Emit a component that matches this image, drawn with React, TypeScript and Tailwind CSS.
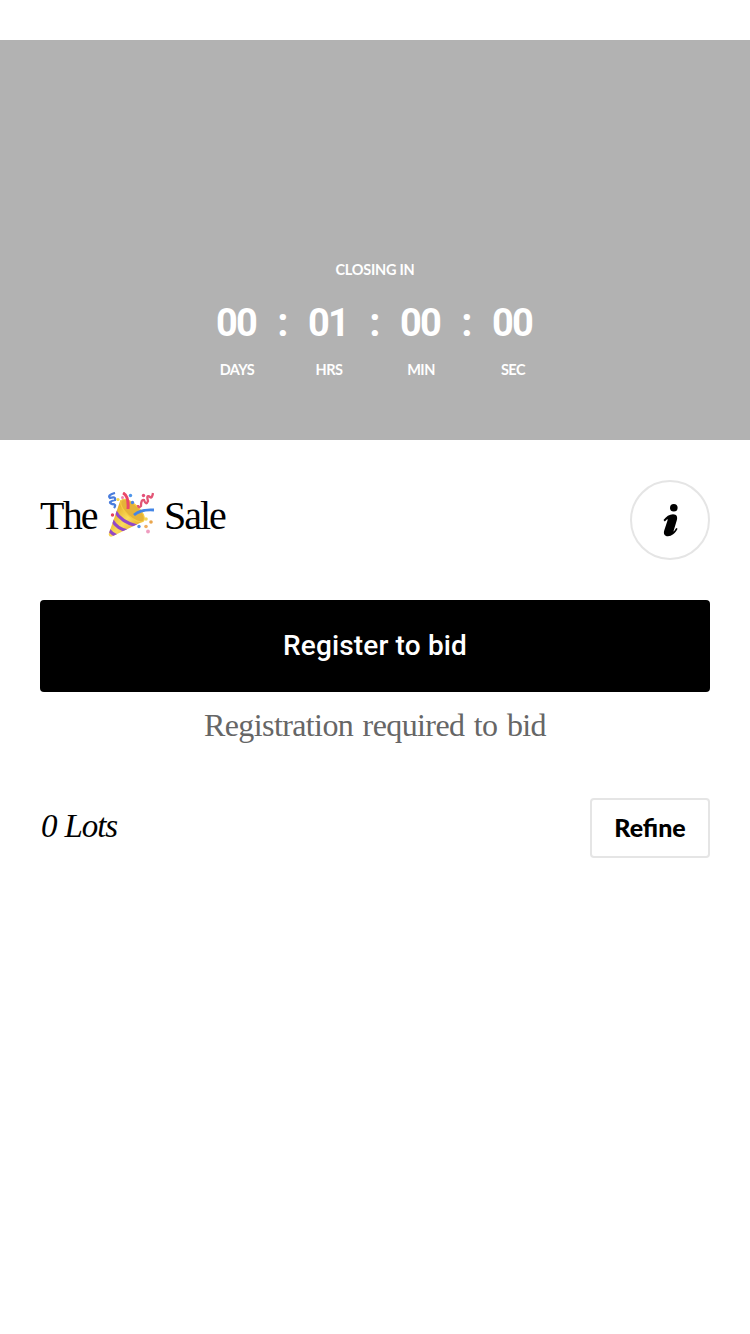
const units = [
  { value: "00", label: "DAYS" },
  { value: "01", label: "HRS" },
  { value: "00", label: "MIN" },
  { value: "00", label: "SEC" },
];

const sans = "font-['Lato','Liberation_Sans',sans-serif]";
const serif = "font-['Liberation_Serif',serif]";

function PartyPopper() {
  return (
    <svg viewBox="0 0 46 46" className="h-[46px] w-[46px] shrink-0" aria-hidden="true">
      <defs>
        <linearGradient id="cone" x1="0" y1="0.3" x2="0.8" y2="1">
          <stop offset="0" stopColor="#dfa31d" />
          <stop offset="0.5" stopColor="#fbdc5b" />
          <stop offset="1" stopColor="#d99a1a" />
        </linearGradient>
        <clipPath id="coneClip">
          <path d="M12.5 8 Q25 16 36 29 L4 44.5 Q0 45.5 1 41 Z" />
        </clipPath>
      </defs>
      <path d="M12.5 8 Q25 16 36 29 L4 44.5 Q0 45.5 1 41 Z" fill="url(#cone)" />
      <ellipse cx="24.5" cy="18.6" rx="15" ry="6.3" transform="rotate(43 24.5 18.6)" fill="#e5b338" stroke="#f6cc43" strokeWidth="1.2" />
      <g clipPath="url(#coneClip)" fill="none" stroke="#9248c8" strokeWidth="3.2">
        <path d="M7 19 Q13 30 29 34" />
        <path d="M4 28 Q9 37 20 39" />
        <path d="M0 37 Q4 42 9 44" />
      </g>
      <path d="M15 1 Q21 4 20 17" fill="none" stroke="#ea4768" strokeWidth="3" />
      <path d="M26 23 Q33 17 46 18" fill="none" stroke="#4385e6" strokeWidth="2.8" />
      <path d="M7 1 Q-1 3 2 6 Q8 4 7 8 Q-1 10 4 12 Q9 12 6 16" fill="none" stroke="#4a7ddd" strokeWidth="2.3" />
      <path d="M30 13 Q30 17 33 14 Q33 7 36 8 Q38 14 40 9 Q38 2 42 5 Q44 7 45 1" fill="none" stroke="#e25575" strokeWidth="2.3" />
      <g>
        <circle cx="10" cy="7.5" r="1.6" fill="#f7d84b" />
        <circle cx="14.5" cy="5.5" r="1.5" fill="#ef86ad" />
        <circle cx="22.5" cy="3.5" r="1.7" fill="#4d95eb" />
        <circle cx="24.5" cy="10.5" r="1.7" fill="#4d85e5" />
        <circle cx="35.5" cy="3.5" r="1.7" fill="#e5507a" />
        <circle cx="4.5" cy="23" r="1.7" fill="#e5405d" />
        <circle cx="38" cy="27" r="1.8" fill="#f4d659" />
        <circle cx="43" cy="30" r="1.8" fill="#e9a54d" />
        <circle cx="31" cy="34.5" r="1.7" fill="#4d8bea" />
        <circle cx="38" cy="34.5" r="1.8" fill="#f0ae62" />
        <circle cx="40" cy="39.5" r="1.9" fill="#ef9dc0" />
      </g>
    </svg>
  );
}

function InfoGlyph() {
  return (
    <svg viewBox="0 0 16 34" className="ml-0.5 h-[34px] w-4" aria-hidden="true">
      <circle cx="10.8" cy="4.7" r="3.8" />
      <path d="M.5 17 C3 13.5 6.5 11.2 10 11.2 C13.9 11.2 14.8 14 13.8 17.3 L10.8 27.2 C10.3 28.8 10.5 28.8 11.2 28.1 L13.2 24.9 L14.6 25.8 C12 30.5 8.6 33.2 5 33.2 C1.4 33.2 .2 30.6 1.3 27.2 L4.5 17.4 C4.9 16 4.5 15.8 3.8 16.6 L1.8 18.6 Z" />
    </svg>
  );
}

export default function App() {
  return (
    <main className="flex min-h-[1334px] w-full flex-col bg-white pt-10 text-black">
      <section className={`flex h-[400px] flex-col items-center bg-[#b2b2b2] pt-[220px] font-bold text-white ${sans}`}>
        <p className="h-5 text-[14.5px] leading-5 tracking-[-0.25px]">CLOSING IN</p>
        <div className="mt-[18px] flex">
          {units.map((unit, i) => (
            <div key={unit.label} className="flex">
              {i > 0 && (
                <span className="w-[28px] text-center font-['Roboto',sans-serif] text-[40px] leading-[50px]">:</span>
              )}
              <div className="flex w-16 flex-col items-center">
                <span className="mr-0.5 h-[48px] font-['Roboto',sans-serif] text-[38px] leading-[50px] tracking-[-1.8px]">{unit.value}</span>
                <span className="mt-[14px] text-[14.5px] leading-5 tracking-[-0.5px]">{unit.label}</span>
              </div>
            </div>
          ))}
        </div>
      </section>

      <div className="flex h-40 items-start justify-between px-10 pt-10">
        <h1 className={`flex h-[70px] items-center text-[40px] leading-[50px] ${serif}`}>
          <span className="w-[68px] pt-0.5 tracking-[-1.8px]">The</span>
          <PartyPopper />
          <span className="ml-[10px] pt-0.5 tracking-[-2px]">Sale</span>
        </h1>
        <button className="flex h-20 w-20 items-center justify-center rounded-full border-2 border-[#e5e5e5]" aria-label="Info">
          <InfoGlyph />
        </button>
      </div>

      <div className="flex flex-col px-10">
        <button className="h-[92px] rounded-[4px] bg-black font-['Roboto',sans-serif] text-[28px] font-medium tracking-[0.15px] text-white">
          Register to bid
        </button>
        <p className={`mt-2 text-center text-[32px] leading-[50px] tracking-[-0.6px] [word-spacing:2px] text-[#666] ${serif}`}>Registration required to bid</p>
      </div>

      <div className="mt-12 flex h-[60px] items-center justify-between px-10">
        <p className={`pl-px text-[33px] italic leading-[56px] tracking-[-1.1px] [word-spacing:1px] pb-1 ${serif}`}>0 Lots</p>
        <button className={`h-[60px] w-[120px] rounded-[4px] border-2 border-[#e5e5e5] text-[25px] font-black ${sans}`}>
          Refine
        </button>
      </div>
    </main>
  );
}
